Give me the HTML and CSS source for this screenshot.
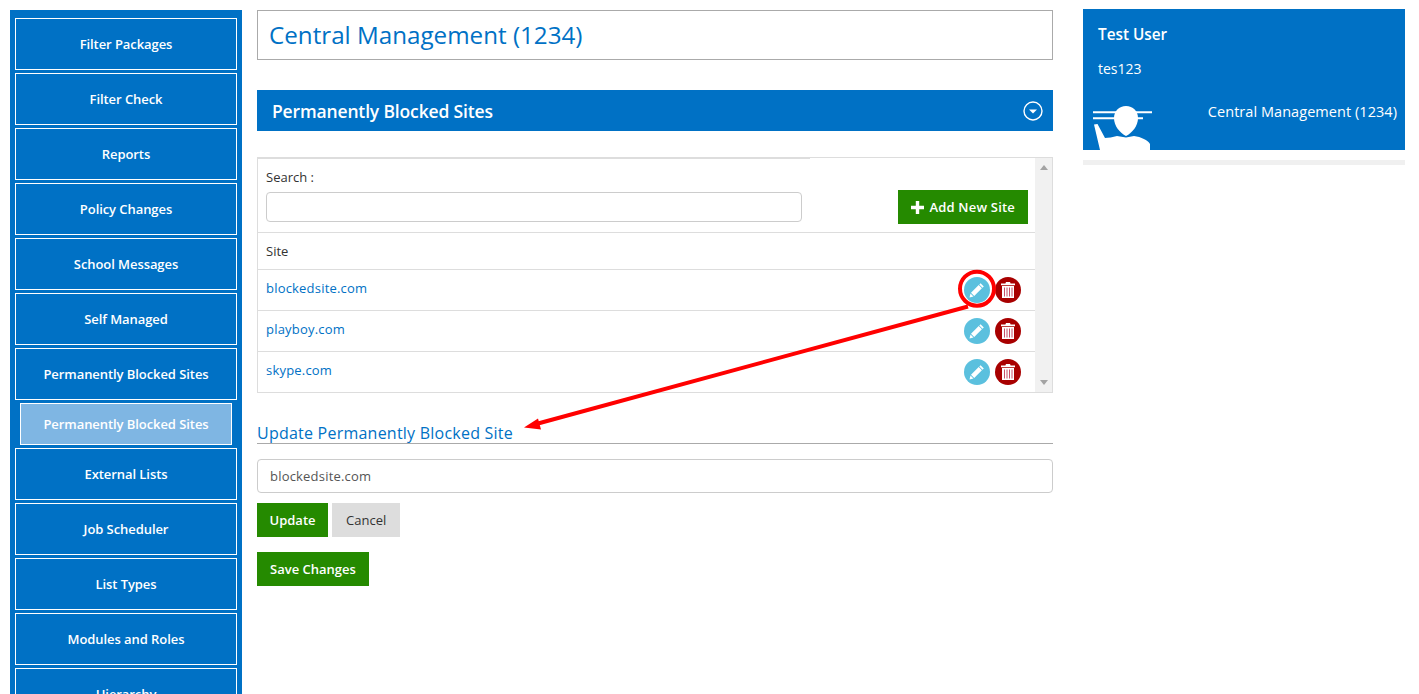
FILE: index.html
```html
<!DOCTYPE html>
<html lang="en">
<head>
    <meta charset="UTF-8">
    <title>Permanently Blocked Sites</title>
    <link rel="stylesheet" href="styles.css">
</head>
<body>
    <div class="page">
        <nav class="sidebar">
            <a class="nav-item">Filter Packages</a>
            <a class="nav-item">Filter Check</a>
            <a class="nav-item">Reports</a>
            <a class="nav-item">Policy Changes</a>
            <a class="nav-item">School Messages</a>
            <a class="nav-item">Self Managed</a>
            <a class="nav-item">Permanently Blocked Sites</a>
            <a class="nav-sub">Permanently Blocked Sites</a>
            <a class="nav-item">External Lists</a>
            <a class="nav-item">Job Scheduler</a>
            <a class="nav-item">List Types</a>
            <a class="nav-item">Modules and Roles</a>
            <a class="nav-item">Hierarchy</a>
        </nav>

        <main class="content">
            <h1 class="page-title">Central Management (1234)</h1>

            <div class="section-bar">
                <h2>Permanently Blocked Sites</h2>
                <svg class="collapse-icon" width="20" height="20" viewBox="0 0 20 20">
                    <circle cx="10" cy="10" r="9" fill="none" stroke="#fff" stroke-width="1.4"/>
                    <path d="M6 8.500h8l-4 4z" fill="#fff"/>
                </svg>
            </div>

            <div class="table-panel">
                <div class="table-scroll">
                    <table>
                        <tr class="search-row">
                            <td class="search-cell">
                                <label for="search">Search :</label>
                                <input id="search" type="text">
                            </td>
                            <td class="add-cell">
                                <a class="btn btn-add">
                                    <svg width="13" height="13" viewBox="0 0 13 13"><path d="M4.800 0h3.400v4.800H13v3.400H8.200V13H4.800V8.200H0V4.800h4.800z" fill="#fff"/></svg>
                                    Add New Site
                                </a>
                            </td>
                        </tr>
                        <tr class="head-row">
                            <td colspan="2">Site</td>
                        </tr>
                        <tr class="site-row">
                            <td><a class="site-link">blockedsite.com</a></td>
                            <td class="actions">
                                <a class="round-btn edit"><svg width="16" height="16" viewBox="0 0 16 16"><path d="M11.600 1.200l3.200 3.200-1.300 1.300-3.200-3.200zM9.700 3.100l3.200 3.200-7.700 7.700-3.200-3.200zM1.500 11.500l3 3-4 1z" fill="#fff"/></svg></a>
                                <a class="round-btn trash"><svg width="14" height="16" viewBox="0 0 14 16"><path d="M5 0h4l.6 1.400H14v1.800H0V1.400h4.400zM1 4h12v12H1z" fill="#fff"/><path d="M3.500 5.500v9M6 5.500v9M8.500 5.500v9M11 5.500v9" stroke="#c8506a" stroke-width="1"/></svg></a>
                            </td>
                        </tr>
                        <tr class="site-row">
                            <td><a class="site-link">playboy.com</a></td>
                            <td class="actions">
                                <a class="round-btn edit"><svg width="16" height="16" viewBox="0 0 16 16"><path d="M11.600 1.200l3.200 3.200-1.300 1.300-3.200-3.200zM9.700 3.100l3.200 3.200-7.700 7.700-3.200-3.200zM1.500 11.500l3 3-4 1z" fill="#fff"/></svg></a>
                                <a class="round-btn trash"><svg width="14" height="16" viewBox="0 0 14 16"><path d="M5 0h4l.6 1.400H14v1.800H0V1.400h4.400zM1 4h12v12H1z" fill="#fff"/><path d="M3.500 5.500v9M6 5.500v9M8.500 5.500v9M11 5.500v9" stroke="#c8506a" stroke-width="1"/></svg></a>
                            </td>
                        </tr>
                        <tr class="site-row">
                            <td><a class="site-link">skype.com</a></td>
                            <td class="actions">
                                <a class="round-btn edit"><svg width="16" height="16" viewBox="0 0 16 16"><path d="M11.600 1.200l3.200 3.200-1.300 1.300-3.200-3.200zM9.700 3.100l3.200 3.200-7.700 7.700-3.200-3.200zM1.500 11.500l3 3-4 1z" fill="#fff"/></svg></a>
                                <a class="round-btn trash"><svg width="14" height="16" viewBox="0 0 14 16"><path d="M5 0h4l.6 1.400H14v1.800H0V1.400h4.400zM1 4h12v12H1z" fill="#fff"/><path d="M3.500 5.500v9M6 5.500v9M8.500 5.500v9M11 5.500v9" stroke="#c8506a" stroke-width="1"/></svg></a>
                            </td>
                        </tr>
                    </table>
                </div>
                <div class="scrollbar">
                    <span class="arrow-up"></span>
                    <span class="arrow-down"></span>
                </div>
            </div>

            <h3 class="form-title">Update Permanently Blocked Site</h3>
            <input class="site-input" type="text" value="blockedsite.com">
            <div class="form-buttons">
                <a class="btn btn-green">Update</a>
                <a class="btn btn-grey">Cancel</a>
            </div>
            <a class="btn btn-green btn-save">Save Changes</a>
        </main>

        <aside class="user-column">
            <div class="user-card">
                <div class="user-name">Test User</div>
                <div class="user-login">tes123</div>
                <svg class="user-icon" width="60" height="46" viewBox="0 0 60 46">
                    <path d="M0 8.300h59M0 14.300h50" stroke="#fff" stroke-width="2"/>
                    <path d="M33 2c7 0 12 5 12 12 0 8-6 15-12 18-6-3-12-10-12-18 0-7 5-12 12-12z" fill="#fff"/>
                    <path d="M1 20.500l3.500-.5L12 34c3 0 8-1 12-2l9 1.500 8-1.500c7 1 14 4 16 8v6H7z" fill="#fff"/>
                </svg>
                <div class="user-org">Central Management (1234)</div>
            </div>
            <div class="user-strip"></div>
        </aside>

        <svg class="annotation" width="1419" height="694" viewBox="0 0 1419 694">
            <circle cx="977" cy="288.700" r="17" fill="none" stroke="#f00" stroke-width="4"/>
            <path d="M968 306.500L538 423.500" stroke="#f00" stroke-width="4"/>
            <path d="M524 427.500l14-9 3 11z" fill="#f00"/>
        </svg>
    </div>
</body>
</html>
```

FILE: styles.css
```css
html, body {
    margin: 0;
    height: 100%;
    overflow: hidden;
    background-color: #fff;
}
body {
    font-family: "Open Sans", "Noto Sans", sans-serif;
    font-size: 13px;
    color: #333;
}
.page {
    position: relative;
    display: flex;
    align-items: flex-start;
    height: 694px;
}

/* menu on the left */
.sidebar {
    flex: none;
    display: flex;
    flex-direction: column;
    gap: 3px;
    width: 222px;
    margin: 10px 0 0 10px;
    padding: 8px 5px 20px;
    background-color: #0071c5;
}
.nav-item, .nav-sub {
    display: flex;
    flex: none;
    align-items: center;
    justify-content: center;
    box-sizing: border-box;
    color: #fff;
    font-weight: 600;
    font-size: 13px;
    letter-spacing: -0.07px;
    border: 1px solid #fff;
}
.nav-item {
    height: 52px;
}
.nav-sub {
    height: 42px;
    margin: 0 5px;
    background-color: #7fb6e3;
}

/* middle column */
.content {
    flex: none;
    width: 796px;
    margin: 10px 0 0 15px;
}
.page-title {
    box-sizing: border-box;
    height: 50px;
    margin: 0;
    padding-left: 11px;
    border: 1px solid #aaa;
    color: #0071c5;
    font-size: 24.200px;
    font-weight: 500;
    line-height: 47px;
}
.section-bar {
    display: flex;
    align-items: center;
    justify-content: space-between;
    height: 41px;
    margin-top: 30px;
    padding: 0 10px 0 15px;
    background-color: #0071c5;
    color: #fff;
}
.section-bar h2 {
    margin: 0;
    font-size: 17.500px;
    font-weight: 600;
    letter-spacing: -0.15px;
}
.table-panel {
    display: flex;
    box-sizing: border-box;
    height: 236px;
    margin-top: 26px;
    border: 1px solid #ddd;
}
.table-scroll {
    flex: 1;
}
table {
    width: 100%;
    table-layout: fixed;
    border-collapse: collapse;
}
td {
    padding: 0 8px;
    border-bottom: 1px solid #ddd;
}
tr:last-child td {
    border-bottom: 0;
}
.search-row td {
    height: 74px;
    vertical-align: top;
}
.search-cell {
    width: 536px;
    box-shadow: inset 0 1px 0 #ddd;
}
.search-row label {
    display: block;
    margin-top: 10px;
}
.search-row input {
    display: block;
    box-sizing: border-box;
    width: 536px;
    height: 30px;
    margin-top: 6px;
    border: 1px solid #ccc;
    border-radius: 4px;
}
.add-cell {
    padding-right: 7px;
    text-align: right;
}
.btn-add {
    margin-top: 32px;
    background-color: #258a00;
    letter-spacing: 0.2px;
}
.head-row td {
    height: 36px;
}
.site-row td {
    height: 40px;
}
.site-link {
    position: relative;
    top: -2px;
    color: #0071c5;
    letter-spacing: 0.2px;
}
.actions {
    text-align: right;
    font-size: 0;
}
td.actions {
    padding-right: 14px;
}
.round-btn {
    display: inline-flex;
    align-items: center;
    justify-content: center;
    width: 26px;
    height: 26px;
    margin-left: 5px;
    border-radius: 50%;
    vertical-align: middle;
}
.edit {
    background-color: #5bc0de;
}
.trash {
    background-color: #a80000;
}
.scrollbar {
    display: flex;
    flex: none;
    flex-direction: column;
    justify-content: space-between;
    align-items: center;
    box-sizing: border-box;
    width: 17px;
    padding: 7px 0;
    background-color: #f1f1f1;
}
.arrow-up, .arrow-down {
    width: 0;
    height: 0;
    border-left: 4px solid transparent;
    border-right: 4px solid transparent;
}
.arrow-up {
    border-bottom: 5px solid #a3a3a3;
}
.arrow-down {
    border-top: 5px solid #a3a3a3;
}

/* update form */
.form-title {
    margin: 30px 0 0;
    border-bottom: 1px solid #aaa;
    color: #0071c5;
    font-size: 16px;
    font-weight: 500;
    letter-spacing: 0.23px;
    line-height: 20px;
}
.site-input {
    display: block;
    box-sizing: border-box;
    width: 796px;
    height: 34px;
    margin-top: 15px;
    padding: 0 12px;
    border: 1px solid #ccc;
    border-radius: 4px;
    color: #555;
    font-family: inherit;
    font-size: 13px;
    letter-spacing: 0.2px;
}
.form-buttons {
    display: flex;
    gap: 4px;
    margin-top: 10px;
}
.btn {
    display: inline-flex;
    align-items: center;
    justify-content: center;
    box-sizing: border-box;
    height: 34px;
    padding: 0 13px;
    font-weight: 600;
    font-size: 13px;
    color: #fff;
}
.btn svg {
    margin-right: 5px;
}
.btn-green {
    background-color: #258a00;
}
.form-buttons .btn-green {
    padding: 0 12.500px;
}
.btn-grey {
    padding: 0 14px;
    background-color: #ddd;
    color: #333;
    font-weight: 400;
}
.btn-save {
    margin-top: 15px;
}

/* user box on the right */
.user-column {
    flex: none;
    width: 322px;
    margin: 9px 0 0 30px;
}
.user-card {
    position: relative;
    box-sizing: border-box;
    height: 141px;
    padding: 15px 8px 0 15px;
    background-color: #0071c5;
    color: #fff;
}
.user-name {
    font-size: 15.300px;
    font-weight: 600;
    line-height: 20px;
}
.user-login {
    margin-top: 15px;
    font-size: 14px;
    line-height: 20px;
}
.user-org {
    margin-top: 23px;
    text-align: right;
    font-size: 14.500px;
    letter-spacing: 0.05px;
    line-height: 20px;
}
.user-icon {
    position: absolute;
    left: 10px;
    bottom: 0;
}
.user-strip {
    height: 5px;
    margin-top: 10px;
    background-color: #f0f0f0;
}
.annotation {
    position: absolute;
    top: 0;
    left: 0;
    pointer-events: none;
}
```
